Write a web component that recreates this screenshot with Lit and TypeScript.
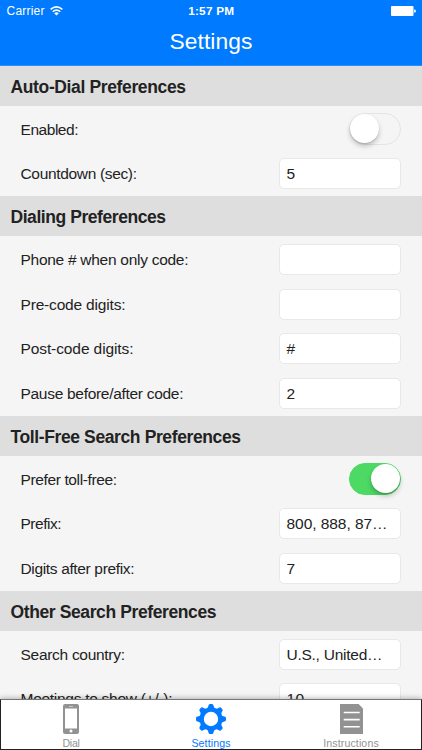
import { LitElement, html, css, svg } from "lit";
import { customElement, property } from "lit/decorators.js";
import { styleMap } from "lit/directives/style-map.js";

const FAMILY = '"Liberation Sans", Arial, sans-serif';
const pen = document.createElement("canvas").getContext("2d")!;

/** Letter spacing that sets a text to the given width, first glyph to last. */
function tracking(text: string, size: number, weight: number, width: number): string {
  pen.font = `${weight} ${size}px ${FAMILY}`;
  return `${((width - pen.measureText(text).width) / Math.max(1, text.length - 1)).toFixed(3)}px`;
}

@customElement("fit-text")
class FitText extends LitElement {
  @property() text = "";
  @property({ type: Number }) size = 15.5;
  @property({ type: Number }) weight = 400;
  @property({ type: Number }) width = 0;

  static styles = css`
    :host { display: inline-block; white-space: nowrap; }
  `;

  render() {
    const look = {
      fontSize: `${this.size}px`,
      fontWeight: `${this.weight}`,
      letterSpacing: this.width ? tracking(this.text, this.size, this.weight, this.width) : "normal",
    };
    return html`<span style=${styleMap(look)}>${this.text}</span>`;
  }
}

interface Row { label: string; width: number; value?: string; valueWidth?: number; on?: boolean }
interface Section { title: string; width: number; rows: Row[] }

const SECTIONS: Section[] = [
  { title: "Auto-Dial Preferences", width: 175.5, rows: [
    { label: "Enabled:", width: 58, on: false },
    { label: "Countdown (sec):", width: 116.5, value: "5" },
  ] },
  { title: "Dialing Preferences", width: 155.5, rows: [
    { label: "Phone # when only code:", width: 168, value: "" },
    { label: "Pre-code digits:", width: 105, value: "" },
    { label: "Post-code digits:", width: 113, value: "#" },
    { label: "Pause before/after code:", width: 163, value: "2" },
  ] },
  { title: "Toll-Free Search Preferences", width: 230.5, rows: [
    { label: "Prefer toll-free:", width: 96.5, on: true },
    { label: "Prefix:", width: 41, value: "800, 888, 87…", valueWidth: 101 },
    { label: "Digits after prefix:", width: 114, value: "7" },
  ] },
  { title: "Other Search Preferences", width: 206, rows: [
    { label: "Search country:", width: 104.5, value: "U.S., United…", valueWidth: 96 },
    { label: "Meetings to show (+/-):", width: 152, value: "10", valueWidth: 17.5 },
  ] },
];

const phoneIcon = svg`<svg width="16" height="30" viewBox="0 0 16 30">
  <path fill="#929292" fill-rule="evenodd" d="M2 0H14Q16 0 16 2V28Q16 30 14 30H2Q0 30 0 28V2Q0 0 2 0ZM2 4.6V24.6H14V4.6ZM8 25.6A1.5 1.5 0 1 0 8 28.6A1.5 1.5 0 1 0 8 25.6ZM6 2V2.6H10V2Z"/>
</svg>`;

const teeth = [0, 45, 90, 135, 180, 225, 270, 315];
const gearIcon = svg`<svg width="30" height="30" viewBox="-15 -15 30 30">
  <circle r="9.3" fill="none" stroke="#007aff" stroke-width="4.2"/>
  ${teeth.map((a) => svg`<path fill="#007aff" transform="rotate(${a})" d="M-4.6 -10.2Q-2.8 -11.2 -2.5 -13.4Q-2.2 -15 -1.1 -15H1.1Q2.2 -15 2.5 -13.4Q2.8 -11.2 4.6 -10.2Z"/>`)}
</svg>`;

const documentIcon = svg`<svg width="23" height="30" viewBox="0 0 23 30">
  <path fill="#929292" d="M0 0H18.6L23 4.6V30H0Z"/>
  <path stroke="#fff" stroke-width="1.6" d="M3.7 8.5H19.7M3.7 15.6H19.7M3.7 22.7H19.7"/>
</svg>`;

@customElement("app-root")
class AppRoot extends LitElement {
  static styles = css`
    :host {
      display: flex; flex-direction: column; box-sizing: border-box;
      width: 422px; height: 750px; overflow: hidden;
      background: #f5f5f5; color: #222; font-family: "Liberation Sans", Arial, sans-serif;
    }
    svg { display: block; }
    .top { flex: none; height: 65.6px; background: #007aff; color: #fff; box-shadow: inset 0 -0.6px #55a6ff; }
    .status { display: grid; grid-template-columns: 1fr auto 1fr; height: 21px; align-items: center; padding: 0 6px 0 6.5px; box-sizing: border-box; line-height: 14px; }
    .carrier { display: flex; gap: 5px; align-items: center; }
    .battery { justify-self: end; }
    .title { height: 40px; line-height: 40px; text-align: center; }
    .list { flex: 1; min-height: 0; overflow: hidden; }
    .heading { height: 40.6px; line-height: 42px; padding-left: 10.5px; background: #dedede; overflow: hidden; }
    .row { height: 44.8px; display: flex; align-items: center; justify-content: space-between; padding: 0 21px 0 20.5px; line-height: 20px; }
    .label { padding-top: 2px; }
    .field { box-sizing: border-box; width: 122px; height: 31px; border: 1px solid #e8e8e8; border-radius: 5px; background: #fff; padding: 0 6.5px; line-height: 30px; margin-top: 1px; }
    .switch { box-sizing: border-box; width: 52px; height: 32px; border: 1.5px solid #e4e4e4; border-radius: 16px; display: flex; }
    .on { background: #4cd964; border-color: #4cd964; justify-content: flex-end; }
    .knob { width: 29px; height: 29px; border-radius: 50%; background: #fff; box-shadow: 0 3px 5px rgba(0,0,0,.22), 0 1px 1px rgba(0,0,0,.12); }
    .tabs { position: relative; flex: none; box-sizing: border-box; height: 51px; display: grid; grid-template-columns: repeat(3, 1fr); background: #fff; border: 1px solid #222; border-top-color: #777; box-shadow: 0 -1px 5px rgba(0,0,0,.28); }
    .tab { display: flex; flex-direction: column; align-items: center; padding-top: 4px; color: #929292; }
    .caption { line-height: 13px; margin-top: 1px; }
    .active { color: #007aff; }
  `;

  private control(row: Row) {
    if (row.value === undefined) {
      return html`<div class="switch ${row.on ? "on" : ""}"><div class="knob"></div></div>`;
    }
    return html`<div class="field"><fit-text .text=${row.value} .width=${row.valueWidth ?? 0}></fit-text></div>`;
  }

  private tab(icon: unknown, name: string, width: number, active = false) {
    return html`<div class="tab ${active ? "active" : ""}">${icon}
      <div class="caption"><fit-text .text=${name} .size=${10.6} .width=${width}></fit-text></div></div>`;
  }

  render() {
    return html`
      <div class="top">
        <div class="status">
          <div class="carrier">
            <fit-text .text=${"Carrier"} .size=${12} .width=${38}></fit-text>
            <svg width="13" height="10" viewBox="0 0 13 10">
              <path fill="none" stroke="#fff" stroke-width="1.5" d="M.6 3.4Q6.5 -1.7 12.4 3.4M2.7 5.7Q6.5 2.5 10.3 5.7"/>
              <path fill="#fff" d="M4.2 7.2Q6.5 5.4 8.8 7.2L6.5 9.6Z"/>
            </svg>
          </div>
          <fit-text .text=${"1:57 PM"} .size=${11.8} .weight=${700} .width=${46}></fit-text>
          <svg class="battery" width="25" height="10" viewBox="0 0 25 10">
            <rect width="22.5" height="10" rx="1" fill="#fff"/><path fill="#fff" d="M23.2 3.2Q25 3.6 25 5T23.2 6.8Z"/>
          </svg>
        </div>
        <div class="title"><fit-text .text=${"Settings"} .size=${22.8} .width=${83}></fit-text></div>
      </div>
      <div class="list">
        ${SECTIONS.map((s) => html`
          <div class="heading"><fit-text .text=${s.title} .size=${17.5} .weight=${700} .width=${s.width}></fit-text></div>
          ${s.rows.map((r) => html`
            <div class="row"><fit-text class="label" .text=${r.label} .width=${r.width}></fit-text>${this.control(r)}</div>`)}`)}
      </div>
      <div class="tabs">
        ${this.tab(phoneIcon, "Dial", 17.5)}
        ${this.tab(gearIcon, "Settings", 39, true)}
        ${this.tab(documentIcon, "Instructions", 55.5)}
      </div>`;
  }
}
